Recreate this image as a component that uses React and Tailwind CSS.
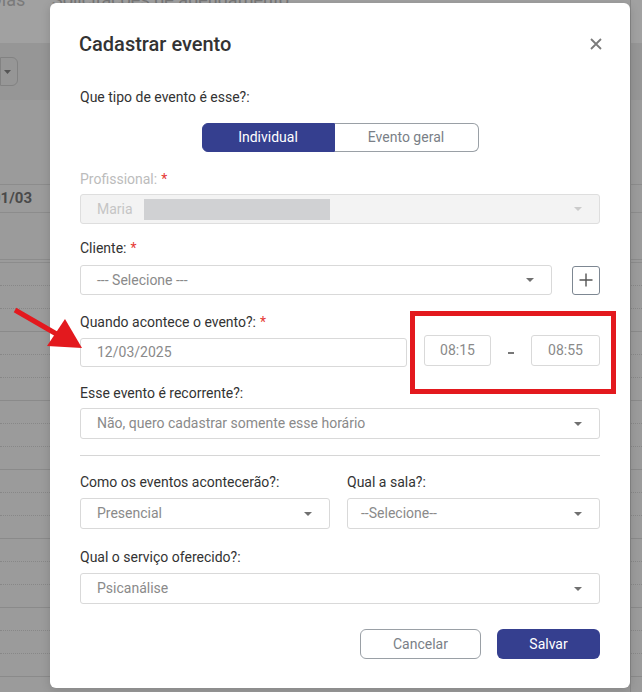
import React from 'react';

const Caret = () => (
  <svg width="8" height="4" viewBox="0 0 8 4" className="shrink-0">
    <path d="M0 0 L8 0 L4 4 Z" fill="#707070" />
  </svg>
);

const Label = ({ children, required, muted }) => (
  <div className={`h-5 leading-5 text-[14px] ${muted ? 'text-[#bcbcbc]' : 'text-[#333]'}`}>
    {children}
    {required && <span className="text-[#e53935] ml-1">*</span>}
  </div>
);

const Select = ({ value, className = '', disabled, children }) => (
  <div
    className={`h-[30px] flex items-center justify-between pl-4 pr-[17px] border rounded-[3px] text-[14px] ${
      disabled ? 'bg-[#f3f3f3] border-[#dedede] text-[#c5c5c5]' : 'bg-white border-[#d9d9d9] text-[#8a8a8a]'
    } ${className}`}
  >
    <div className="flex items-center h-full">
      {value}
      {children}
    </div>
    <span className={disabled ? 'opacity-30' : ''}>
      <Caret />
    </span>
  </div>
);

const HourBlock = () => (
  <div className="flex flex-col">
    <div className="h-[23px] border-b border-dotted border-[#878787]" />
    <div className="h-[23px] border-b border-dotted border-[#878787]" />
    <div className="h-[23px] border-b border-[#8a8a8a]" />
  </div>
);

const Background = () => (
  <div className="w-full h-[692px] bg-[#9b9b9b] overflow-hidden flex flex-col">
    <div className="h-[43px] shrink-0 bg-[#a1a1a1] overflow-hidden">
      <div className="flex items-start -mt-[10px]">
        <span className="text-[18px] text-[#7a7a7a] leading-5 w-[60px] -ml-[10px]">Dias</span>
        <span className="text-[18px] text-[#777] leading-5 ml-[2px]">Solicitações de agendamento</span>
      </div>
    </div>
    <div className="h-[57px] shrink-0 bg-[#969696] flex items-center">
      <div className="w-[18px] h-[29px] border border-[#828282] rounded-r-[6px] flex items-center justify-end pr-[6px]">
        <svg width="7" height="4" viewBox="0 0 7 4">
          <path d="M0 0 L7 0 L3.5 4 Z" fill="#555" />
        </svg>
      </div>
    </div>
    <div className="h-[85px] shrink-0 border-b border-[#8c8c8c]" />
    <div className="h-[28px] shrink-0 border-b border-[#8c8c8c] flex items-center">
      <span className="text-[15px] font-bold text-[#4a4a4a] -ml-[8px]">01/03</span>
    </div>
    <div className="h-[47px] shrink-0 border-b border-[#8c8c8c]" />
    <div className="h-[3px] shrink-0 border-b border-[#8c8c8c]" />
    <HourBlock />
    <HourBlock />
    <HourBlock />
    <HourBlock />
    <HourBlock />
    <HourBlock />
  </div>
);

const App = () => {
  return (
    <div className="relative w-[642px] h-[692px] overflow-hidden" style={{ fontFamily: 'Roboto, "Liberation Sans", sans-serif' }}>
      <Background />
      <div className="absolute top-0 left-[630px] w-px h-full bg-[#888]" />

      <div className="absolute left-[50px] top-[3px] w-[580px] h-[685px] bg-white rounded-[6px] shadow-[0_2px_10px_rgba(0,0,0,0.15)] px-[30px] pt-[27px]">
        <div className="flex items-center justify-between h-[28px]">
          <h2 className="text-[20px] font-medium text-[#333] leading-[28px] -ml-px">Cadastrar evento</h2>
          <button className="mr-[-2px] text-[#777]">
            <svg width="12" height="12" viewBox="0 0 12 12">
              <path d="M1 1 L11 11 M11 1 L1 11" stroke="#7a7a7a" strokeWidth="1.8" />
            </svg>
          </button>
        </div>

        <div className="mt-[29px]">
          <Label>Que tipo de evento é esse?:</Label>
        </div>

        <div className="mt-[16px] flex justify-center">
          <div className="flex h-[29px] text-[14px]">
            <button className="w-[133px] bg-[#353f8f] text-white rounded-l-[6px] border border-[#353f8f]">Individual</button>
            <button className="w-[144px] bg-white text-[#7a7f87] rounded-r-[6px] border border-[#9aa0a6] border-l-0">Evento geral</button>
          </div>
        </div>

        <div className="mt-[17px]">
          <Label muted required>Profissional:</Label>
          <Select className="mt-[5px] h-[29px]" disabled value="Maria">
            <div className="ml-[11px] w-[186px] h-[21px] bg-[#d0d1d3]" />
          </Select>
        </div>

        <div className="mt-[14px]">
          <Label required>Cliente:</Label>
          <div className="mt-[7px] flex items-center gap-[20px]">
            <Select className="flex-1 h-[29px]" value="--- Selecione ---" />
            <button className="w-[28px] h-[29px] border border-[#7d8792] rounded-[3px] flex items-center justify-center">
              <svg width="14" height="14" viewBox="0 0 14 14">
                <path d="M7 0.5 V13.5 M0.5 7 H13.5" stroke="#555" strokeWidth="1.4" />
              </svg>
            </button>
          </div>
        </div>

        <div className="mt-[17px] flex items-end">
          <div className="w-[327px]">
            <Label required>Quando acontece o evento?:</Label>
            <div className="mt-[6px] h-[29px] border border-[#d9d9d9] rounded-[3px] pl-4 flex items-center text-[14px] text-[#8a8a8a]">
              12/03/2025
            </div>
          </div>
          <div className="ml-[17px] flex items-center mb-px">
            <div className="w-[67px] h-[31px] border border-[#d9d9d9] rounded-[3px] flex items-center justify-center text-[14px] text-[#8a8a8a]">
              08:15
            </div>
            <div className="w-[40px] flex justify-center pt-[4px]">
              <div className="w-[6px] h-[2px] bg-[#777]" />
            </div>
            <div className="w-[69px] h-[31px] border border-[#d9d9d9] rounded-[3px] flex items-center justify-center text-[14px] text-[#8a8a8a]">
              08:55
            </div>
          </div>
        </div>

        <div className="mt-[16px]">
          <Label>Esse evento é recorrente?:</Label>
          <Select className="mt-[5px] h-[31px]" value="Não, quero cadastrar somente esse horário" />
        </div>

        <div className="mt-[16px] border-t border-[#d6d6d6]" />

        <div className="mt-[16px] flex gap-[17px]">
          <div className="w-[250px]">
            <Label>Como os eventos acontecerão?:</Label>
            <Select className="mt-[6px] h-[31px]" value="Presencial" />
          </div>
          <div className="flex-1">
            <Label>Qual a sala?:</Label>
            <Select className="mt-[6px] h-[31px] pl-[13px]" value="--Selecione--" />
          </div>
        </div>

        <div className="mt-[18px]">
          <Label>Qual o serviço oferecido?:</Label>
          <Select className="mt-[6px] h-[31px]" value="Psicanálise" />
        </div>

        <div className="mt-[25px] flex justify-end gap-[16px]">
          <button className="w-[121px] h-[30px] border border-[#9aa0a6] rounded-[6px] text-[14px] text-[#7a7f87]">Cancelar</button>
          <button className="w-[103px] h-[30px] bg-[#353f8f] rounded-[6px] text-[14px] text-white">Salvar</button>
        </div>
      </div>

      <div className="absolute left-[410px] top-[311px] w-[206px] h-[83px] border-[5px] border-[#e3191e]" />

      <svg className="absolute left-0 top-[300px]" width="90" height="60" viewBox="0 300 90 60">
        <path d="M15 310 L60 336" stroke="#e3191e" strokeWidth="5" strokeLinecap="butt" />
        <path d="M47 346 L65 319 L82 348 Z" fill="#e3191e" />
      </svg>
    </div>
  );
};

export default App;
